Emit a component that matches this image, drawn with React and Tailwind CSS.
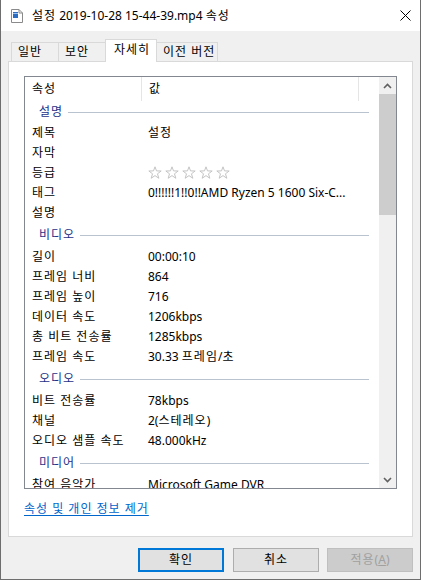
import React from "react";

// Hangul in Noto Sans CJK is proportional; widen it a bit to match Malgun Gothic
const K = ({ children }) => <span className="tracking-[1px]">{children}</span>;

const sections = [
  {
    title: "설명",
    first: true,
    rows: [
      ["제목", <K>설정</K>],
      ["자막", ""],
      ["등급", "stars"],
      ["태그", "0!!!!!!1!!0!!AMD Ryzen 5 1600 Six-C..."],
      ["설명", ""],
    ],
  },
  {
    title: "비디오",
    rows: [
      ["길이", "00:00:10"],
      ["프레임 너비", "864"],
      ["프레임 높이", "716"],
      ["데이터 속도", "1206kbps"],
      ["총 비트 전송률", "1285kbps"],
      ["프레임 속도", <>30.33 <K>프레임</K>/<K>초</K></>],
    ],
  },
  {
    title: "오디오",
    rows: [
      ["비트 전송률", "78kbps"],
      ["채널", <>2(<K>스테레오</K>)</>],
      ["오디오 샘플 속도", "48.000kHz"],
    ],
  },
  {
    title: "미디어",
    rows: [["참여 음악가", "Microsoft Game DVR"]],
  },
];

const Star = () => (
  <svg width="14" height="14" viewBox="0 0 14 14">
    <polygon
      points="7,0.8 8.53,4.9 13.18,4.99 9.47,7.8 10.82,12.26 7,9.6 3.18,12.26 4.53,7.8 0.82,4.99 5.47,4.9"
      fill="none"
      stroke="#c4c4c4"
      strokeWidth="1"
      strokeLinejoin="round"
    />
  </svg>
);

const FileIcon = () => (
  <svg width="12" height="14" viewBox="0 0 12 14">
    <path d="M0.5 0.5 H8 L11.5 4 V13.5 H0.5 Z" fill="#fff" stroke="#8a8a8a" />
    <path d="M8 0.5 V4 H11.5" fill="none" stroke="#8a8a8a" />
    <rect x="2" y="3" width="5" height="6" fill="#2b6cc4" />
    <rect x="2" y="4" width="5" height="1" fill="#9cc3f0" />
  </svg>
);

const Chevron = ({ up }) => (
  <svg width="9" height="6" viewBox="0 0 9 6">
    <path
      d={up ? "M1 5 L4.5 1.5 L8 5" : "M1 1 L4.5 4.5 L8 1"}
      fill="none"
      stroke="#606060"
      strokeWidth="1.6"
    />
  </svg>
);

const Tab = ({ label, active, className }) => (
  <div
    className={
      active
        ? `relative z-10 -ml-px h-[23px] border border-b-0 border-[#d9d9d9] bg-white pl-[8px] pt-[2px] ${className}`
        : `-ml-px h-[19px] border border-b-0 border-[#d9d9d9] bg-[#f0f0f0] pl-[6px] pt-[1px] ${className}`
    }
  >
    <K>{label}</K>
  </div>
);

export default function App() {
  return (
    <div className="flex h-[580px] w-[421px] flex-col border-x border-b border-[#6e6e6e] bg-[#f0f0f0] font-['Noto_Sans','Noto_Sans_CJK_KR',sans-serif] text-[12px] leading-[16px] text-black">
      {/* Title bar */}
      <div className="flex h-[31px] items-center bg-white pl-[10px] pr-[9px]">
        <FileIcon />
        <span className="ml-[9px] flex-1 whitespace-nowrap">
          <K>설정</K> 2019-10-28 15-44-39.mp4 <K>속성</K>
        </span>
        <svg width="11" height="11" viewBox="0 0 11 11">
          <path d="M0.5 0.5 L10.5 10.5 M10.5 0.5 L0.5 10.5" stroke="#000" strokeWidth="1" />
        </svg>
      </div>

      <div className="flex flex-1 flex-col px-[7px]">
        {/* Tabs */}
        <div className="flex h-[30px] items-end pl-[3px] pt-[8px]">
          <Tab label="일반" className="ml-0 w-[48px]" />
          <Tab label="보안" className="w-[48px]" />
          <Tab label="자세히" active className="-mb-px w-[52px]" />
          <Tab label="이전 버전" className="w-[62px]" />
        </div>

        {/* Panel */}
        <div className="flex h-[476px] flex-col border border-[#d9d9d9] bg-white px-[15px] pt-[14px]">
          <div className="flex h-[413px] border border-[#828790]">
            <div className="flex-1 overflow-hidden">
              {/* Header */}
              <div className="flex h-[24px] items-center">
                <div className="w-[116px] pl-[7px]">
                  <K>속성</K>
                </div>
                <div className="h-[24px] w-px bg-[#e5e5e5]" />
                <div className="w-[216px] pl-[7px]">
                  <K>값</K>
                </div>
                <div className="h-[24px] w-px bg-[#e5e5e5]" />
              </div>

              {sections.map((s) => (
                <div key={s.title}>
                  <div
                    className={`flex items-center pl-[14px] pr-[10px] text-[#1e3287] ${
                      s.first ? "h-[22px]" : "h-[24px]"
                    }`}
                  >
                    <K>{s.title}</K>
                    <div className="ml-[5px] h-px flex-1 bg-[#b9c3d0]" />
                  </div>
                  {s.rows.map(([k, v]) => (
                    <div key={k} className="flex h-[20px] items-center">
                      <div className="w-[123px] shrink-0 whitespace-nowrap pl-[7px]">
                        <K>{k}</K>
                      </div>
                      {v === "stars" ? (
                        <div className="flex gap-[3px]">
                          <Star />
                          <Star />
                          <Star />
                          <Star />
                          <Star />
                        </div>
                      ) : (
                        <div className="whitespace-nowrap">{v}</div>
                      )}
                    </div>
                  ))}
                </div>
              ))}
            </div>

            {/* Scrollbar */}
            <div className="flex w-[17px] flex-col bg-[#f0f0f0]">
              <div className="flex h-[17px] items-center justify-center">
                <Chevron up />
              </div>
              <div className="h-[121px] bg-[#cdcdcd]" />
              <div className="flex-1" />
              <div className="flex h-[17px] items-center justify-center">
                <Chevron />
              </div>
            </div>
          </div>

          <div className="mt-[12px]">
            <span className="text-[#0066cc] underline underline-offset-2">
              <K>속성 및 개인 정보 제거</K>
            </span>
          </div>
        </div>

        {/* Buttons */}
        <div className="mt-[11px] flex justify-end">
          <button className="h-[24px] w-[86px] border-2 border-[#0078d7] bg-[#e1e1e1]">
            <K>확인</K>
          </button>
          <button className="ml-[9px] h-[24px] w-[86px] border border-[#adadad] bg-[#e1e1e1]">
            <K>취소</K>
          </button>
          <button className="ml-[8px] h-[24px] w-[86px] border border-[#bfbfbf] bg-[#cccccc] text-[#a0a0a0]">
            <K>적용</K>(<span className="underline">A</span>)
          </button>
        </div>
      </div>
    </div>
  );
}
